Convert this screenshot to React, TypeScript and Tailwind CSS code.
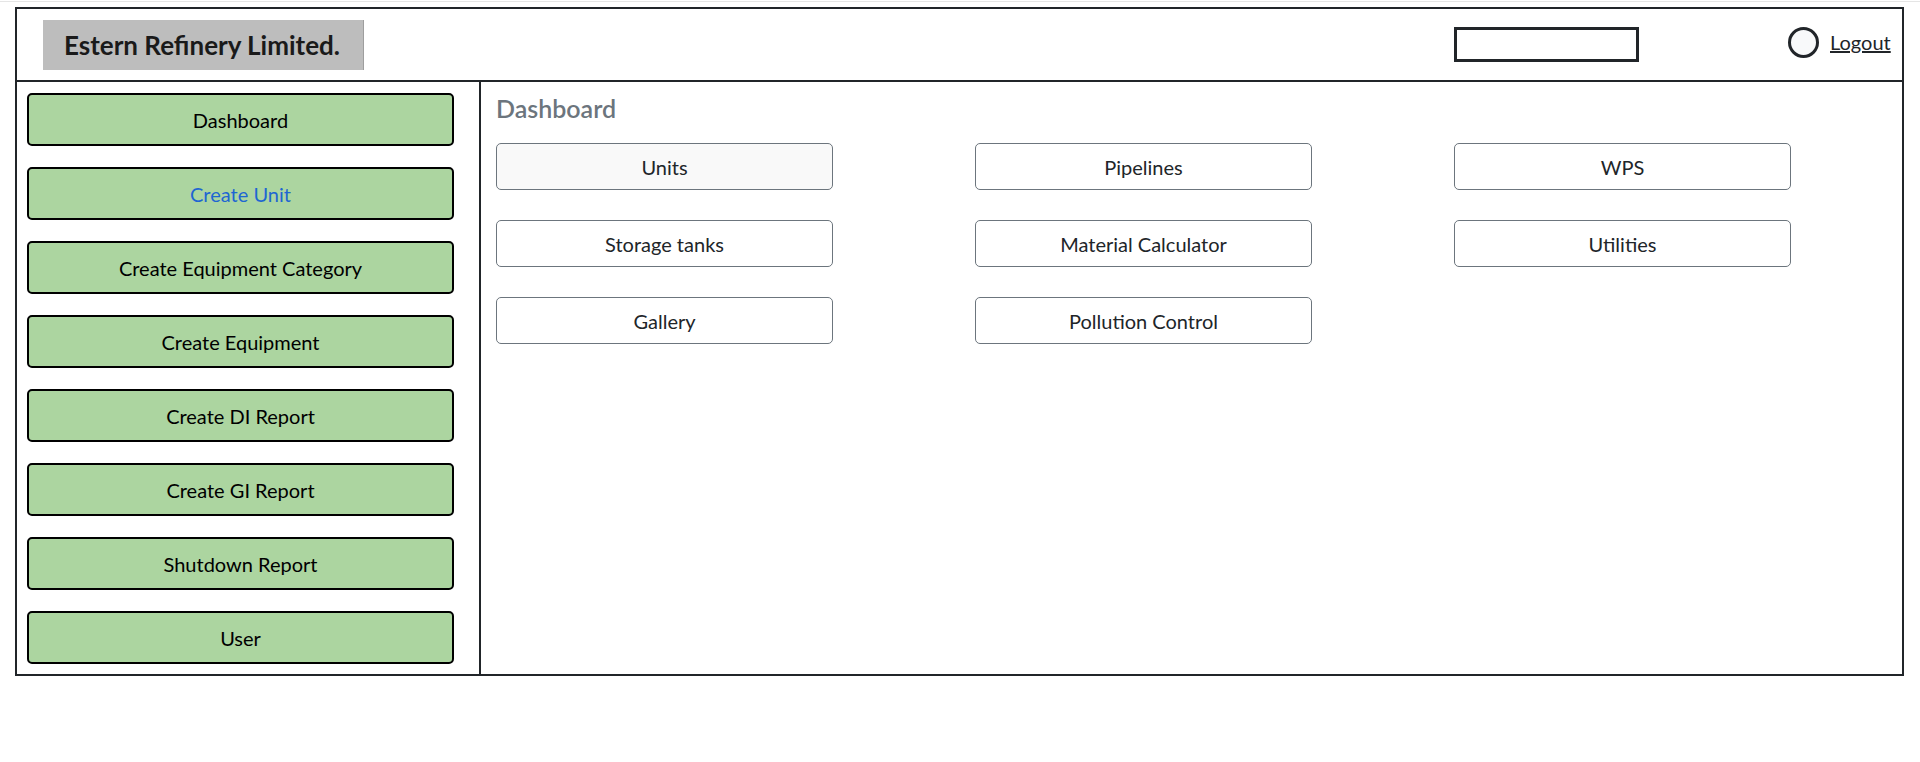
const sideLinks = [
  'Dashboard',
  'Create Unit',
  'Create Equipment Category',
  'Create Equipment',
  'Create DI Report',
  'Create GI Report',
  'Shutdown Report',
  'User',
]

const tiles = [
  'Units',
  'Pipelines',
  'WPS',
  'Storage tanks',
  'Material Calculator',
  'Utilities',
  'Gallery',
  'Pollution Control',
]

export default function App() {
  return (
    <div className="min-h-screen bg-white font-['Segoe_UI',Lato,sans-serif] text-[#212529]">
      <div className="mt-px h-px bg-[#e5e5e5]" />

      <div className="ml-[15px] mt-[5px] w-[1889px] border-2 border-[#212529]">
        {/* header */}
        <header className="flex h-[73px] items-start border-b-2 border-[#212529]">
          <div className="ml-[26px] mt-[11px] flex h-[50px] w-[321px] items-center border-r border-[#9e9e9e] bg-[#bdbdbd] pl-[21px]">
            <span className="text-[26px] font-bold leading-none text-[#1a1a1a]">Estern Refinery Limited.</span>
          </div>
          <input
            type="text"
            className="ml-[1090px] mt-[18px] h-[35px] w-[185px] border-[3px] border-[#212529] bg-white outline-none"
          />
          <div className="ml-[149px] mt-[18px] h-[31px] w-[31px] rounded-full border-[3px] border-[#212529] bg-[#f8f9fa]" />
          <a href="#" className="ml-[11px] mt-[20px] text-[20px] leading-[26px] text-[#212529] underline">
            Logout
          </a>
        </header>

        <div className="flex">
          {/* sidebar */}
          <nav className="flex w-[464px] flex-col gap-[21px] border-r-2 border-[#212529] pb-[10px] pl-[10px] pt-[11px]">
            {sideLinks.map((l) => (
              <button
                key={l}
                className={`flex h-[53px] w-[427px] items-center justify-center rounded-[5px] border-2 border-black bg-[#acd5a0] text-[20px] ${
                  l === 'Create Unit' ? 'text-[#1e66d2]' : 'text-black'
                }`}
              >
                {l}
              </button>
            ))}
          </nav>

          {/* main */}
          <main className="flex-1 pl-[15px] pt-[11px]">
            <h5 className="text-[25px] font-semibold leading-[30px] text-[#6c757d]">Dashboard</h5>
            <div className="mt-[20px] grid grid-cols-[337px_337px_337px] gap-x-[142px] gap-y-[30px]">
              {tiles.map((t) => (
                <button
                  key={t}
                  className={`h-[47px] rounded-[5px] border border-[#6c757d] text-[20px] text-[#212529] ${
                    t === 'Units' ? 'bg-[#f9f9f9]' : 'bg-white'
                  }`}
                >
                  {t}
                </button>
              ))}
            </div>
          </main>
        </div>
      </div>
    </div>
  )
}
